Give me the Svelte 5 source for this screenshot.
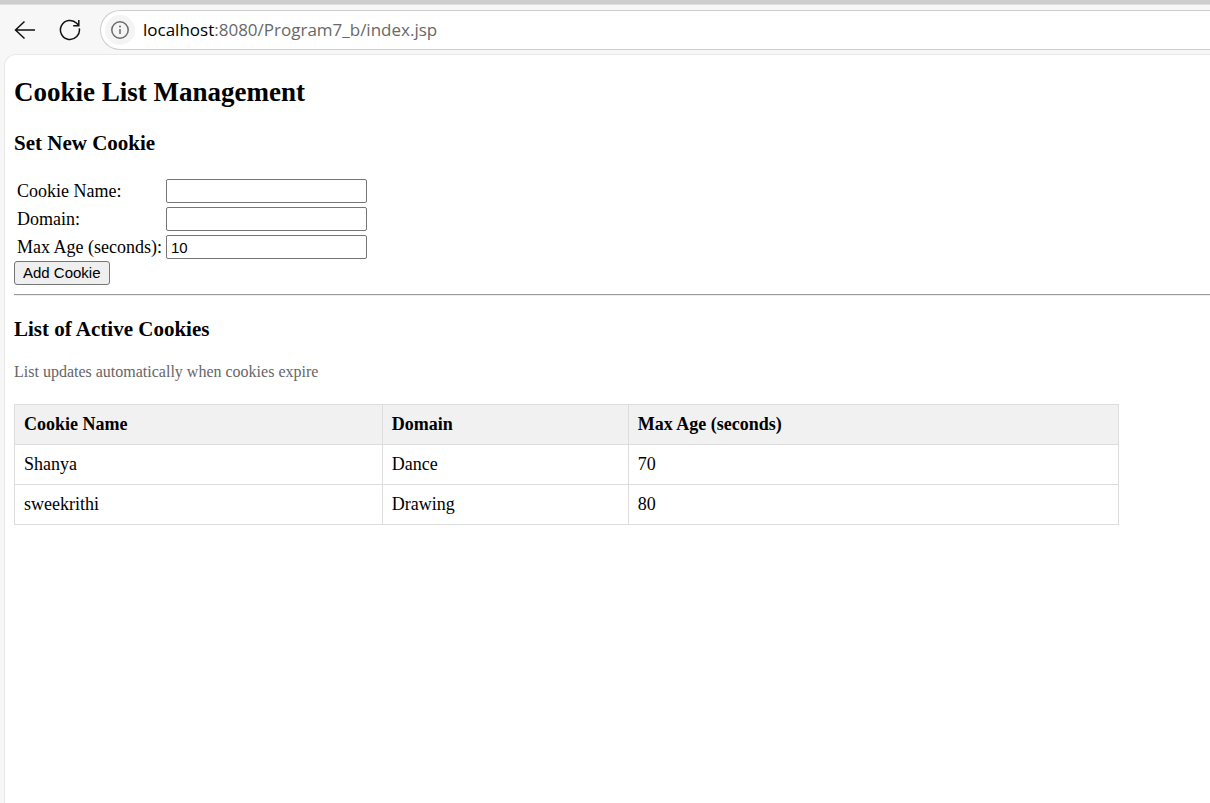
<script>
  let name = $state('');
  let domain = $state('');
  let maxAge = $state('10');
  let cookies = $state([
    { name: 'Shanya', domain: 'Dance', maxAge: 70 },
    { name: 'sweekrithi', domain: 'Drawing', maxAge: 80 }
  ]);

  function addCookie(event) {
    event.preventDefault();
    if (!name) return;
    cookies.push({ name, domain, maxAge });
    name = '';
    domain = '';
  }
</script>

<div class="browser">
  <header class="toolbar">
    <button class="tool" type="button" aria-label="Back">
      <svg width="22" height="22" viewBox="0 0 22 22">
        <path d="M10.5 2.5 1.5 11l9 8.500M1.500 11H21" />
      </svg>
    </button>
    <button class="tool" type="button" aria-label="Refresh">
      <svg width="22" height="22" viewBox="0 0 22 22">
        <path d="M20.300 9.300A9.500 9.500 0 1 1 17.700 4.300L19.500 6.300M19.800 1v5.700h-5.600" />
      </svg>
    </button>
    <div class="address">
      <button class="info" type="button" aria-label="View site information">
        <svg width="18" height="18" viewBox="0 0 18 18">
          <circle cx="9" cy="9" r="8.2" />
          <path d="M9 8v5" />
          <circle class="dot" cx="9" cy="5.4" r="1" />
        </svg>
      </button>
      <span class="url"><span class="host">localhost</span>:8080/Program7_b/index.jsp</span>
    </div>
  </header>

  <main>
    <h2>Cookie List Management</h2>
    <h3>Set New Cookie</h3>
    <form onsubmit={addCookie}>
      <div class="fields">
        <label for="name">Cookie Name:</label>
        <input id="name" type="text" bind:value={name} />
        <label for="domain">Domain:</label>
        <input id="domain" type="text" bind:value={domain} />
        <label for="age">Max Age (seconds):</label>
        <input id="age" type="text" bind:value={maxAge} />
      </div>
      <button class="add" type="submit">Add Cookie</button>
    </form>
    <hr />
    <h3>List of Active Cookies</h3>
    <p>List updates automatically when cookies expire</p>
    <table>
      <colgroup>
        <col class="col-name" />
        <col class="col-domain" />
        <col />
      </colgroup>
      <thead>
        <tr><th>Cookie Name</th><th>Domain</th><th>Max Age (seconds)</th></tr>
      </thead>
      <tbody>
        {#each cookies as cookie}
          <tr><td>{cookie.name}</td><td>{cookie.domain}</td><td>{cookie.maxAge}</td></tr>
        {/each}
      </tbody>
    </table>
  </main>
</div>

<style>
  :global(body) {
    margin: 0;
    background: #f7f7f7;
  }
  .browser {
    box-sizing: border-box;
    min-height: 100vh;
    display: flex;
    flex-direction: column;
    border-top: 4px solid #cdcdcd;
    font: 18px/20px "Liberation Serif", "Times New Roman", serif;
    color: #000;
  }
  .toolbar {
    display: flex;
    align-items: center;
    padding: 5px 0 5px 14px;
    border-top: 1px solid #dfdfdf;
    box-sizing: border-box;
    height: 50px;
  }
  .tool {
    display: flex;
    margin: 0 23px 0 0;
    padding: 0;
    border: 0;
    background: none;
  }
  svg {
    fill: none;
    stroke: #111;
    stroke-width: 1.5;
  }
  .address {
    flex: 1;
    box-sizing: border-box;
    height: 40px;
    margin-left: -4px;
    padding-left: 4px;
    display: flex;
    align-items: center;
    gap: 8px;
    border: 1px solid #cdcdcd;
    border-right: 0;
    border-radius: 20px 0 0 20px;
    background: #fff;
  }
  .info {
    display: flex;
    align-items: center;
    justify-content: center;
    width: 30px;
    height: 30px;
    padding: 0;
    border: 0;
    border-radius: 50%;
    background: #f4f4f4;
  }
  .info svg {
    stroke: #6b6b6b;
  }
  .info .dot {
    fill: #6b6b6b;
    stroke: none;
  }
  .url {
    font: 17px/24px "Open Sans", "Segoe UI", sans-serif;
    color: #686868;
  }
  .host {
    color: #000;
  }
  main {
    flex: 1;
    margin-left: 4px;
    padding: 22px 0 16px 9px;
    border: 1px solid #e8e8e8;
    border-width: 1px 0 0 1px;
    border-radius: 12px 0 0 0;
    background: #fff;
  }
  h2 {
    margin: 0 0 24px;
    font-size: 27px;
    line-height: 30px;
  }
  h3 {
    margin: 0 0 24px;
    font-size: 21px;
    line-height: 24px;
  }
  .fields {
    display: grid;
    grid-template-columns: max-content 201px;
    align-items: center;
    gap: 4px;
    padding: 0 3px;
  }
  input {
    box-sizing: border-box;
    width: 100%;
    height: 24px;
    padding: 1px 4px;
    border: 1px solid #767676;
    border-radius: 2px;
    background: #fff;
    color: #000;
    font: 15px/18px "Liberation Sans", Arial, sans-serif;
  }
  .add {
    display: block;
    height: 24px;
    margin-top: 2px;
    padding: 0 8px;
    border: 1px solid #767676;
    border-radius: 3px;
    background: #efefef;
    color: #000;
    font: 15px/18px "Liberation Sans", Arial, sans-serif;
  }
  hr {
    height: 0;
    margin: 9px 0 21px;
    border: 0;
    border-top: 1px solid #9a9a9a;
    border-bottom: 1px solid #eee;
  }
  hr + h3 {
    margin-bottom: 21px;
  }
  p {
    margin: 0 0 22px;
    color: #666;
    font-size: 16px;
    line-height: 20px;
  }
  table {
    width: 92.4%;
    table-layout: fixed;
    border-collapse: collapse;
  }
  .col-name {
    width: 33.3%;
  }
  .col-domain {
    width: 22.3%;
  }
  th,
  td {
    height: 21px;
    padding: 9px;
    border: 1px solid #ddd;
    text-align: left;
    line-height: 21px;
  }
  th {
    background: #f1f1f1;
  }
</style>
